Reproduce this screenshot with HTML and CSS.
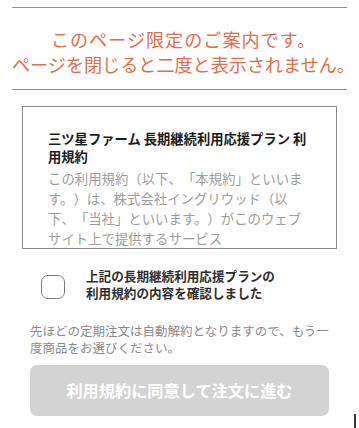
FILE: index.html
```html
<!DOCTYPE html>
<html lang="ja">
<head>
<meta charset="utf-8">
<title>ご案内</title>
<link rel="stylesheet" href="styles.css">
</head>
<body>
<div class="page">
  <header class="notice">
    <p class="notice-line notice-line-first">このページ限定のご案内です。</p>
    <p class="notice-line">ページを閉じると二度と表示されません。</p>
  </header>

  <section class="terms">
    <h2 class="terms-title">三ツ星ファーム 長期継続利用応援プラン 利用規約</h2>
    <p class="terms-body">この利用規約（以下、「本規約」といいます。）は、株式会社イングリウッド（以下、「当社」といいます。）がこのウェブサイト上で提供するサービス</p>
  </section>

  <label class="agree">
    <span class="checkbox"></span>
    <span class="agree-text">上記の長期継続利用応援プランの<br>利用規約の内容を確認しました</span>
  </label>

  <p class="note">先ほどの定期注文は自動解約となりますので、もう一度商品をお選びください。</p>

  <button class="submit" type="button" disabled>利用規約に同意して注文に進む</button>
</div>
<div class="scroll-thumb"></div>
</body>
</html>
```

FILE: styles.css
```css
html, body {
  margin: 0;
  padding: 0;
  background: #ffffff;
}

body {
  font-family: "Noto Sans CJK JP", "Noto Sans", sans-serif;
  text-spacing-trim: space-all;
  width: 359px;
  height: 428px;
  overflow: hidden;
  position: relative;
}

.page {
  padding: 0 12px;
  display: flex;
  flex-direction: column;
}

.notice {
  margin-top: 6.5px;
  border-top: 1.5px solid #e2734f;
  border-bottom: 1.5px solid #e2734f;
  padding: 19.5px 0 12px;
  text-align: center;
  color: #df6f4c;
}

.notice-line {
  margin: 0;
  font-size: 18.1px;
  line-height: 25px;
  white-space: nowrap;
}

.notice-line-first {
  letter-spacing: 1px;
  padding-left: 8px;
}

.terms {
  margin: 16px 10px 0;
  height: 143px;
  box-sizing: border-box;
  border: 1px solid #8c8c8c;
  padding: 23px 26px 0 25px;
  overflow: hidden;
}

.terms-title {
  margin: 0 0 2px;
  font-size: 13.3px;
  line-height: 18px;
  font-weight: 700;
  color: #1c1c1c;
}

.terms-body {
  margin: 0;
  font-size: 13.4px;
  line-height: 20px;
  color: #9d9d9d;
}

.agree {
  margin: 18px 0 0 29px;
  display: flex;
  align-items: flex-start;
  gap: 21px;
}

.checkbox {
  margin-top: 8px;
  width: 24px;
  height: 24px;
  box-sizing: border-box;
  border: 1.5px solid #7d7d7d;
  border-radius: 7px;
  flex: none;
}

.agree-text {
  font-size: 12.6px;
  line-height: 17.4px;
  font-weight: 700;
  color: #2e2e2e;
}

.note {
  margin: 20.4px 18px 0;
  font-size: 12.5px;
  line-height: 17px;
  color: #8a8a8a;
}

.submit {
  margin: 8.5px 18px 0;
  height: 51px;
  border: none;
  border-radius: 7px;
  background: #d3d3d3;
  color: #ffffff;
  font-family: "Noto Sans CJK JP", "Noto Sans", sans-serif;
  font-size: 16.2px;
  font-weight: 700;
  padding: 0;
}

.scroll-thumb {
  position: absolute;
  right: 3px;
  top: 414px;
  width: 2px;
  height: 14px;
  background: #3a3a3a;
}
```
